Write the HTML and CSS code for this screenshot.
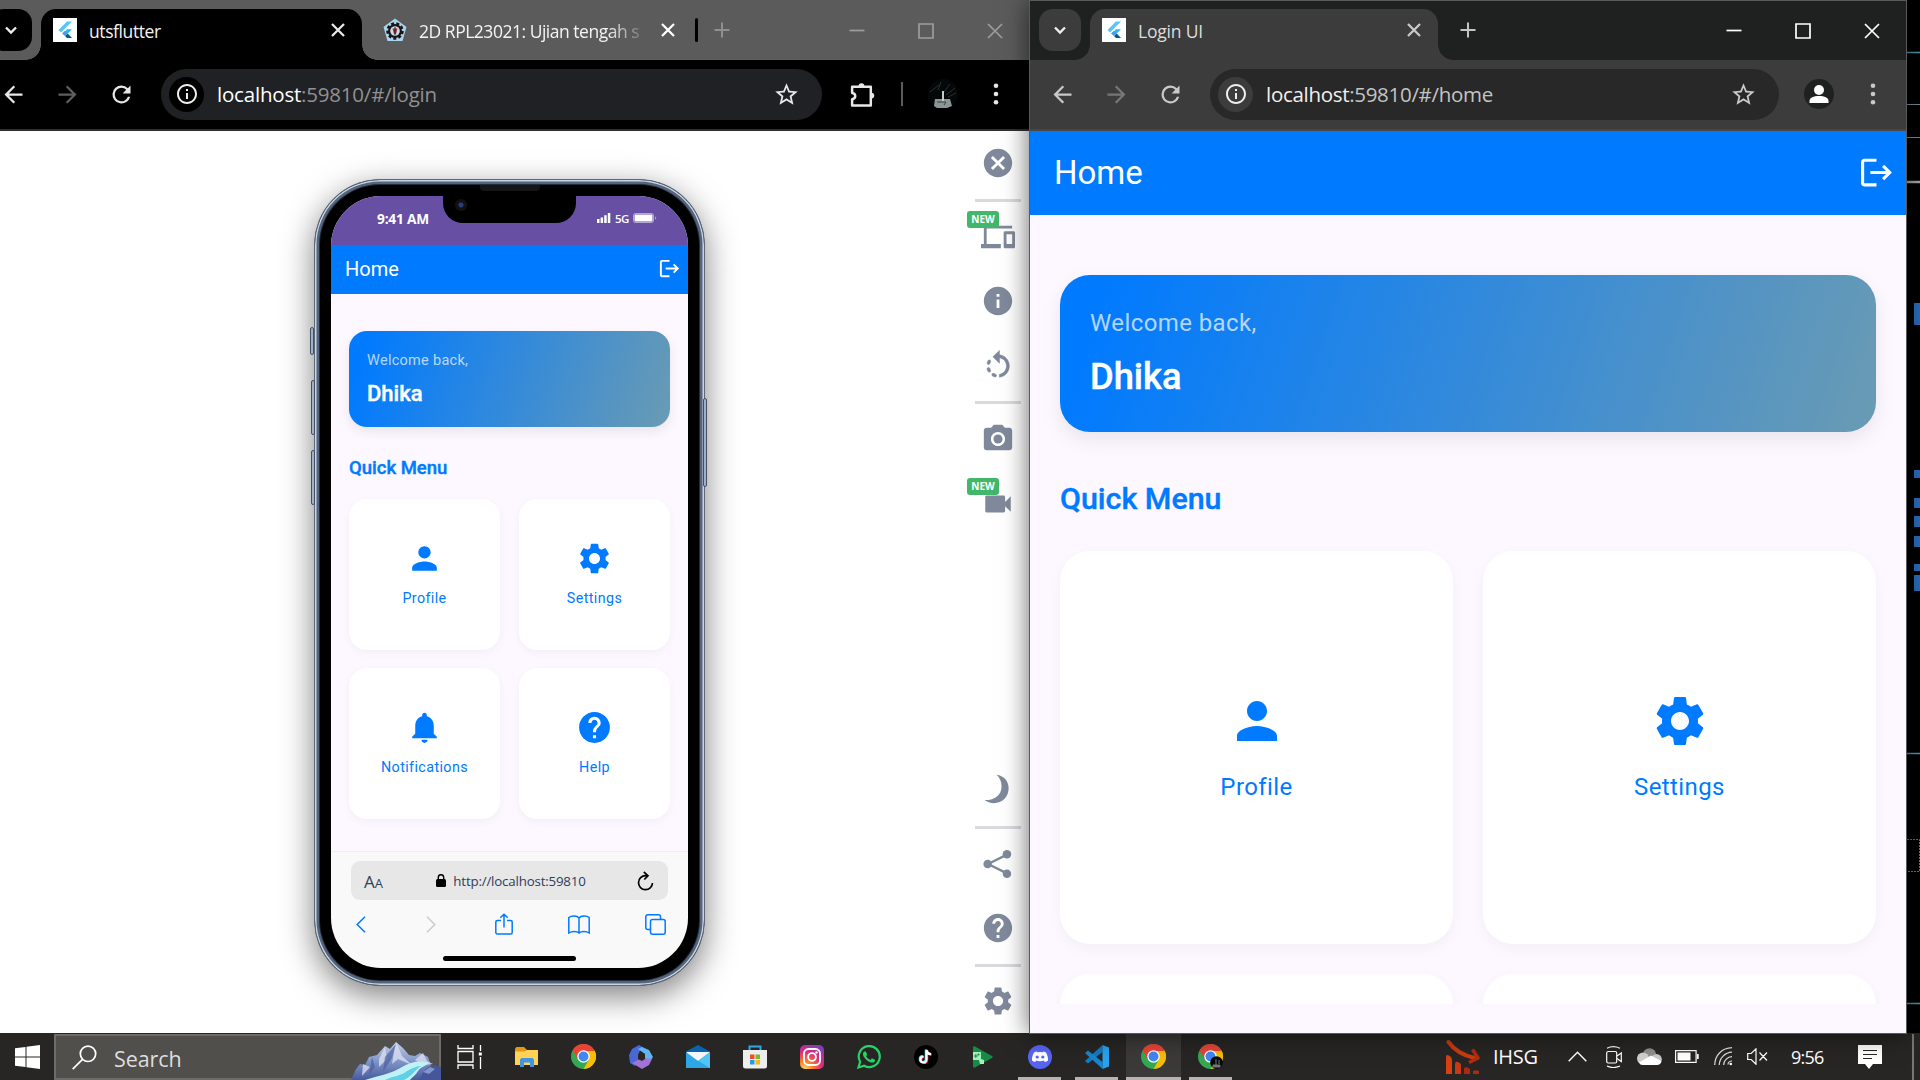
FILE: index.html
```html
<!DOCTYPE html>
<html lang="en">
<head>
<meta charset="utf-8">
<title>Desktop</title>
<link rel="stylesheet" href="styles.css">
</head>
<body>
<svg class="defs" aria-hidden="true">
  <symbol id="gear" viewBox="0 0 24 24"><path d="M19.14 12.94c.04-.3.06-.61.06-.94 0-.32-.02-.64-.07-.94l2.03-1.58c.18-.14.23-.41.12-.61l-1.92-3.32c-.12-.22-.37-.29-.59-.22l-2.39.96c-.5-.38-1.03-.7-1.62-.94l-.36-2.54c-.04-.24-.24-.41-.48-.41h-3.84c-.24 0-.43.17-.47.41l-.36 2.54c-.59.24-1.13.57-1.62.94l-2.39-.96c-.22-.08-.47 0-.59.22L2.74 8.87c-.12.21-.08.47.12.61l2.03 1.58c-.05.3-.09.63-.09.94s.02.64.07.94l-2.03 1.58c-.18.14-.23.41-.12.61l1.92 3.32c.12.22.37.29.59.22l2.39-.96c.5.38 1.03.7 1.62.94l.36 2.54c.05.24.24.41.48.41h3.84c.24 0 .44-.17.47-.41l.36-2.54c.59-.24 1.13-.56 1.62-.94l2.39.96c.22.08.47 0 .59-.22l1.92-3.32c.12-.22.07-.47-.12-.61l-2.01-1.58zM12 15.6c-1.98 0-3.6-1.62-3.6-3.6s1.62-3.6 3.6-3.6 3.6 1.62 3.6 3.6-1.62 3.6-3.6 3.6z"/></symbol>
  <symbol id="person" viewBox="0 0 24 24"><path d="M12 12c2.21 0 4-1.79 4-4s-1.79-4-4-4-4 1.79-4 4 1.79 4 4 4zm0 2c-2.67 0-8 1.34-8 4v2h16v-2c0-2.66-5.33-4-8-4z"/></symbol>
  <symbol id="bell" viewBox="0 0 24 24"><path d="M12 22c1.1 0 2-.9 2-2h-4c0 1.1.89 2 2 2zm6-6v-5c0-3.07-1.64-5.64-4.5-6.32V4c0-.83-.67-1.5-1.5-1.5s-1.5.67-1.5 1.5v.68C7.63 5.36 6 7.92 6 11v5l-2 2v1h16v-1l-2-2z"/></symbol>
  <symbol id="help" viewBox="0 0 24 24"><path d="M12 2C6.48 2 2 6.48 2 12s4.480 10 10 10 10-4.480 10-10S17.520 2 12 2zm1 17h-2v-2h2v2zm2.070-7.750l-.9.920C13.450 12.900 13 13.500 13 15h-2v-.5c0-1.100.450-2.100 1.170-2.830l1.240-1.260c.370-.360.590-.860.590-1.410 0-1.100-.9-2-2-2s-2 .9-2 2H8c0-2.210 1.790-4 4-4s4 1.790 4 4c0 .880-.360 1.680-.930 2.250z"/></symbol>
  <symbol id="info" viewBox="0 0 24 24"><path d="M12 2C6.480 2 2 6.480 2 12s4.480 10 10 10 10-4.480 10-10S17.520 2 12 2zm1 15h-2v-6h2v6zm0-8h-2V7h2v2z"/></symbol>
  <symbol id="info-o" viewBox="0 0 24 24"><path d="M11 7h2v2h-2zm0 4h2v6h-2zm1-9C6.480 2 2 6.480 2 12s4.480 10 10 10 10-4.480 10-10S17.520 2 12 2zm0 18c-4.410 0-8-3.590-8-8s3.590-8 8-8 8 3.590 8 8-3.590 8-8 8z"/></symbol>
  <symbol id="cancel" viewBox="0 0 24 24"><path d="M12 2C6.470 2 2 6.470 2 12s4.470 10 10 10 10-4.470 10-10S17.530 2 12 2zm5 13.590L15.590 17 12 13.410 8.410 17 7 15.590 10.590 12 7 8.410 8.410 7 12 10.590 15.590 7 17 8.410 13.410 12 17 15.590z"/></symbol>
  <symbol id="devices" viewBox="0 0 24 24"><path d="M4 6h18V4H4c-1.100 0-2 .9-2 2v11H0v3h14v-3H4V6zm19 2h-6c-.55 0-1 .45-1 1v10c0 .55.45 1 1 1h6c.55 0 1-.45 1-1V9c0-.55-.45-1-1-1zm-1 9h-4v-7h4v7z"/></symbol>
  <symbol id="rotate" viewBox="0 0 24 24"><path d="M6.560 7.980C6.100 7.520 5.310 7.600 5 8.170c-.28.510-.5 1.030-.67 1.580-.19.630.31 1.250.96 1.250h.01c.43 0 .82-.28.940-.7.120-.4.280-.79.480-1.170.22-.37.150-.84-.16-1.150zM5.310 13h-.02c-.65 0-1.150.620-.96 1.250.160.540.380 1.070.66 1.580.31.570 1.110.66 1.570.2.3-.31.380-.77.170-1.150-.2-.37-.36-.76-.48-1.160-.13-.44-.520-.72-.940-.72zm2.850 6.020c.51.280 1.040.5 1.590.66.620.180 1.240-.32 1.240-.96v-.03c0-.43-.28-.82-.7-.94-.4-.12-.78-.28-1.150-.48-.38-.21-.86-.14-1.160.17l-.03.030c-.45.450-.36 1.240.21 1.550zM13 4.070V1L8.450 5.550 13 10V6.090c2.840.48 5 2.940 5 5.910s-2.160 5.430-5 5.910v2.020c3.950-.49 7-3.850 7-7.930s-3.050-7.440-7-7.930z" stroke="currentColor" stroke-width=".4"/></symbol>
  <symbol id="camera" viewBox="0 0 24 24"><circle cx="12" cy="12" r="3.200"/><path d="M9 2L7.170 4H4c-1.100 0-2 .9-2 2v12c0 1.100.9 2 2 2h16c1.100 0 2-.9 2-2V6c0-1.100-.9-2-2-2h-3.170L15 2H9zm3 15c-2.760 0-5-2.240-5-5s2.240-5 5-5 5 2.240 5 5-2.240 5-5 5z"/></symbol>
  <symbol id="video" viewBox="0 0 24 24"><path d="M17 10.500V7c0-.55-.45-1-1-1H4c-.55 0-1 .45-1 1v10c0 .55.45 1 1 1h12c.55 0 1-.45 1-1v-3.500l4 4v-11l-4 4z"/></symbol>
  <symbol id="share" viewBox="0 0 24 24"><path d="M5 12L19 5M5 12l14 7" stroke="currentColor" stroke-width="1.700"/><circle cx="4.700" cy="12" r="3"/><circle cx="18.300" cy="5.200" r="3"/><circle cx="18.300" cy="18.800" r="3"/></symbol>
  <symbol id="moon" viewBox="0 0 24 24"><path d="M11 2c5 .5 8.500 4.500 8.500 9.500 0 6-4.500 10.500-10.500 10.500-2.500 0-4.700-.8-6.500-2.200 7 .2 12-3.300 12-9.800 0-3.400-1.300-6-3.500-8z"/></symbol>
  <symbol id="logout" viewBox="0 0 24 24"><path d="M17 7l-1.410 1.410L18.170 11H8v2h10.170l-2.580 2.580L17 17l5-5zM4 5h8V3H4c-1.100 0-2 .9-2 2v14c0 1.100.9 2 2 2h8v-2H4V5z"/></symbol>
  <symbol id="back" viewBox="0 0 24 24"><path d="M20 11H7.830l5.590-5.590L12 4l-8 8 8 8 1.410-1.410L7.830 13H20v-2z"/></symbol>
  <symbol id="fwd" viewBox="0 0 24 24"><path d="M4 11h12.170l-5.590-5.590L12 4l8 8-8 8-1.410-1.410L16.170 13H4v-2z"/></symbol>
  <symbol id="reload" viewBox="0 0 24 24"><path d="M17.650 6.350A7.958 7.958 0 0 0 12 4a8 8 0 1 0 7.730 10h-2.080A6 6 0 1 1 12 6c1.660 0 3.140.69 4.220 1.780L13 11h7V4l-2.350 2.350z"/></symbol>
  <symbol id="star" viewBox="0 0 24 24"><path d="M22 9.240l-7.190-.62L12 2 9.190 8.630 2 9.240l5.460 4.730L5.820 21 12 17.270 18.180 21l-1.630-7.030L22 9.240zM12 15.400l-3.760 2.270 1-4.280-3.320-2.880 4.380-.38L12 6.100l1.710 4.040 4.380.38-3.320 2.880 1 4.280L12 15.400z"/></symbol>
  <symbol id="close" viewBox="0 0 24 24"><path d="M6 6l12 12M18 6L6 18" fill="none" stroke="currentColor" stroke-width="2.300"/></symbol>
  <symbol id="plus" viewBox="0 0 24 24"><path d="M12 4.500v15M4.500 12h15" fill="none" stroke="currentColor" stroke-width="2"/></symbol>
  <symbol id="chev" viewBox="0 0 24 24"><path d="M6 9l6 6 6-6" fill="none" stroke="currentColor" stroke-width="2.800"/></symbol>
  <symbol id="dots" viewBox="0 0 24 24"><circle cx="12" cy="3.800" r="2.300"/><circle cx="12" cy="12" r="2.300"/><circle cx="12" cy="20.200" r="2.300"/></symbol>
  <symbol id="w-min" viewBox="0 0 16 16"><path d="M.5 7.500h15" stroke="currentColor" stroke-width="1.700"/></symbol>
  <symbol id="w-max" viewBox="0 0 16 16"><path d="M1 1h14v14h-14z" fill="none" stroke="currentColor" stroke-width="1.700"/></symbol>
  <symbol id="w-close" viewBox="0 0 16 16"><path d="M1 1l14 14M15 1L1 15" stroke="currentColor" stroke-width="1.700"/></symbol>
  <symbol id="flutter" viewBox="0 0 24 24"><path fill="#fff" d="M0 0h24v24H0z"/><path fill="#54c5f8" d="M5.500 12L14 3.500h5L8 14.500z"/><path fill="#29b6f6" d="M10 15.500l4-4.200h5l-4.300 4.200z"/><path fill="#01579b" d="M12 18l2.700-2.500 4.300 4.500h-5z"/><path fill="#4b9be6" d="M9 15.400l2.600-2.500 3 2.700-2.600 2.500z"/></symbol>
  <symbol id="chrome" viewBox="0 0 48 48"><circle cx="24" cy="24" r="24" fill="#34a853"/><path fill="#fbbc05" d="M34.400 30L24 48a24 24 0 0 0 20.800-36H24z"/><path fill="#ea4335" d="M3.200 12l10.400 18L24 13.500h20.800V12a24 24 0 0 0-41.600 0z"/><circle cx="24" cy="24" r="12" fill="#fff"/><circle cx="24" cy="24" r="9.500" fill="#4285f4"/></symbol>
</svg>

<main class="desktop">
  <svg class="wall" viewBox="0 0 13 1034" width="13" height="1034">
    <path d="M0 52.500h13M0 753.500h13M0 1003.500h13" stroke="#4f9db5" stroke-width="1.300"/>
    <path d="M0 104.500h13M0 137.500h13" stroke="#77939c"/>
    <path d="M0 182h13" stroke="#aaa" stroke-width="2.500"/>
    <path d="M7 303h6v22H7zM7 470h6v8H7zM7 498h6v10H7zM7 516h6v11H7zM7 536h6v11H7zM7 564h6v7H7zM7 575h6v16H7z" fill="#2a6fc4"/>
    <path d="M0 839.500h12.500v32H0" fill="none" stroke="#a26a35" stroke-dasharray="2 1"/>
  </svg>

  <section class="window window-left">
    <header class="tabstrip">
      <span class="tabsearch"><svg class="i18"><use href="#chev"/></svg></span>
      <div class="tab active">
        <svg class="i24"><use href="#flutter"/></svg>
        <span class="tab-title t-uts">utsflutter</span>
        <svg class="i24"><use href="#close"/></svg>
      </div>
      <div class="tab second">
        <svg class="i24" viewBox="0 0 24 24"><path fill="#a9d3ee" d="M12 .5L23.500 9l-4 14h-15l-4-14z"/><circle cx="12" cy="13" r="7" fill="#191414"/><circle cx="12" cy="13" r="7.500" fill="none" stroke="#191414" stroke-width="2.500" stroke-dasharray="3 2.200"/><circle cx="12" cy="13" r="4.800" fill="#c9dce6"/><path d="M9.500 10.500h5L13 16h-2z" fill="#a32b30"/><path d="M12 9v8" stroke="#222"/></svg>
        <span class="tab-title t-rpl">2D RPL23021: Ujian tengah s</span>
        <svg class="i24"><use href="#close"/></svg>
      </div>
      <span class="tabline"></span>
      <svg class="i24 newtab"><use href="#plus"/></svg>
      <div class="winbtns"><svg><use href="#w-min"/></svg><svg><use href="#w-max"/></svg><svg><use href="#w-close"/></svg></div>
    </header>
    <nav class="toolbar">
      <svg class="i26"><use href="#back"/></svg>
      <svg class="i26 dim"><use href="#fwd"/></svg>
      <svg class="i26"><use href="#reload"/></svg>
      <div class="omnibox">
        <span class="site"><svg class="i24"><use href="#info-o"/></svg></span>
        <span class="url u-login"><b>localhost</b>:59810/#/login</span>
        <svg class="i26"><use href="#star"/></svg>
      </div>
      <svg class="i26 puzzle" viewBox="0 0 26 26"><path d="M3 5.500h18v18H3v-6c4-.5 4-5.500 0-6z" fill="none" stroke="currentColor" stroke-width="2.400" stroke-linejoin="round"/><path d="M9.200 5a2.800 2.800 0 0 1 5.600 0zM21.500 11.200a2.800 2.800 0 0 1 0 5.600z"/></svg>
      <span class="tooldiv"></span>
      <svg class="avatar" viewBox="0 0 30 30"><circle cx="15" cy="15" r="15" fill="#050808"/><path d="M2 13l9-7M13 3l-3 8M22 5l-6 8M27 9l-9 7M28 14l-8 4" stroke="#263234"/><path d="M7 20h15l2 7-5 2H9l-3-2z" fill="#8d9694"/><path d="M15 12v10" stroke="#c4cccc" stroke-width="2"/><path d="M9 23h9l-2 3" stroke="#3a4242" fill="none"/></svg>
      <svg class="i24 menu"><use href="#dots"/></svg>
    </nav>

    <div class="page">
      <div class="stage">
        <div class="phone">
          <i class="key k1"></i><i class="key k2"></i><i class="key k3"></i><i class="key k4"></i>
          <i class="speaker"></i>
          <div class="screen">
            <div class="status">
              <b>9:41 AM</b>
              <div class="notch"><i></i></div>
              <span class="signal">
                <svg width="14" height="10" viewBox="0 0 14 10"><path d="M0 6h2.500v4H0zM3.600 4.500h2.500V10H3.600zM7.200 2.300h2.500V10H7.200zM10.800 0h2.500v10h-2.500z"/></svg>
                <em>5G</em>
                <svg width="24" height="10" viewBox="0 0 24 10"><rect x=".5" y=".5" width="20" height="9" rx="2" fill="none" stroke="#fff" stroke-opacity=".5"/><rect x="1.500" y="1.500" width="18" height="7" rx="1"/><path d="M22 3v4l1.300-2z" opacity=".5"/></svg>
              </span>
            </div>
            <div class="app small">
              <header class="appbar"><span>Home</span><svg><use href="#logout"/></svg></header>
              <div class="appbody">
                <div class="welcome"><p>Welcome back,</p><h2>Dhika</h2></div>
                <h3>Quick Menu</h3>
                <div class="grid">
                  <div class="card"><svg><use href="#person"/></svg><span>Profile</span></div>
                  <div class="card"><svg><use href="#gear"/></svg><span>Settings</span></div>
                  <div class="card"><svg><use href="#bell"/></svg><span>Notifications</span></div>
                  <div class="card"><svg><use href="#help"/></svg><span>Help</span></div>
                </div>
              </div>
            </div>
            <div class="safari">
              <div class="address">
                <span class="aa">A<small>A</small></span>
                <span class="host"><svg width="10" height="13" viewBox="0 0 10 13"><rect y="5" width="10" height="8" rx="1.500"/><path d="M2.300 6V3.500a2.700 2.700 0 0 1 5.400 0V6" fill="none" stroke="#000" stroke-width="1.400"/></svg>http://localhost:59810</span>
                <svg width="17" height="20" viewBox="0 0 17 20" fill="none" stroke="#000" stroke-width="1.700"><path d="M11 4.700H8.500a7 7 0 1 0 7 7.300M6.800 1l4.200 3.700L7.300 8.500"/></svg>
              </div>
              <div class="tools">
                <svg width="10" height="17" viewBox="0 0 10 17"><path d="M9 .8L1.200 8.500 9 16.200"/></svg>
                <svg width="10" height="17" viewBox="0 0 10 17" class="off"><path d="M1 .8l7.800 7.700L1 16.200"/></svg>
                <svg width="18" height="22" viewBox="0 0 18 22"><path d="M6 7.500H2.300A1.500 1.500 0 0 0 .8 9v10.500A1.500 1.500 0 0 0 2.300 21h13.400a1.500 1.500 0 0 0 1.500-1.500V9a1.500 1.500 0 0 0-1.500-1.500H12M9 14.500V1.200M5.300 4.800L9 1.200l3.700 3.600"/></svg>
                <svg width="22" height="19" viewBox="0 0 22 19"><path d="M11 3v14.500M11 3C9 .5 3.500.5.800 2.500v15.500c2.700-2 8.200-2 10.200 0 2-2 7.500-2 10.200 0V2.500C18.500.5 13 .5 11 3z"/></svg>
                <svg width="21" height="21" viewBox="0 0 21 21"><rect x="5.500" y="5.500" width="14.700" height="14.700" rx="2"/><path d="M5.500 15.500H2.800a2 2 0 0 1-2-2V2.800a2 2 0 0 1 2-2h10.700a2 2 0 0 1 2 2v2.700"/></svg>
              </div>
              <i class="homebar"></i>
            </div>
          </div>
        </div>
      </div>
      <aside class="rail">
        <span><svg><use href="#cancel"/></svg></span>
        <hr>
        <span class="new"><svg><use href="#devices"/></svg><em>NEW</em></span>
        <span><svg><use href="#info"/></svg></span>
        <span><svg><use href="#rotate"/></svg></span>
        <hr>
        <span><svg><use href="#camera"/></svg></span>
        <span class="new low"><svg><use href="#video"/></svg><em>NEW</em></span>
        <span></span>
        <span><svg><use href="#moon"/></svg></span>
        <hr>
        <span><svg><use href="#share"/></svg></span>
        <span><svg><use href="#help"/></svg></span>
        <hr>
        <span><svg><use href="#gear"/></svg></span>
      </aside>
    </div>
  </section>

  <section class="window window-right">
    <header class="tabstrip">
      <span class="tabsearch"><svg class="i18"><use href="#chev"/></svg></span>
      <div class="tab active">
        <svg class="i24"><use href="#flutter"/></svg>
        <span class="tab-title t-login">Login UI</span>
        <svg class="i24"><use href="#close"/></svg>
      </div>
      <svg class="i24 newtab"><use href="#plus"/></svg>
      <div class="winbtns"><svg><use href="#w-min"/></svg><svg><use href="#w-max"/></svg><svg><use href="#w-close"/></svg></div>
    </header>
    <nav class="toolbar">
      <svg class="i26"><use href="#back"/></svg>
      <svg class="i26 dim"><use href="#fwd"/></svg>
      <svg class="i26"><use href="#reload"/></svg>
      <div class="omnibox">
        <span class="site"><svg class="i24"><use href="#info-o"/></svg></span>
        <span class="url"><b>localhost</b>:59810/#/home</span>
        <svg class="i26"><use href="#star"/></svg>
      </div>
      <svg class="avatar" viewBox="0 0 30 30"><circle cx="15" cy="15" r="15" fill="#1f2120"/><circle cx="15" cy="11" r="5" fill="#fff"/><path d="M5.500 24v-2c0-3.500 4-5 9.500-5s9.500 1.500 9.500 5v2z" fill="#fff"/></svg>
      <svg class="i24 menu"><use href="#dots"/></svg>
    </nav>
    <div class="app big">
      <header class="appbar"><span>Home</span><svg><use href="#logout"/></svg></header>
      <div class="appbody">
        <div class="welcome"><p>Welcome back,</p><h2>Dhika</h2></div>
        <h3>Quick Menu</h3>
        <div class="grid">
          <div class="card"><svg><use href="#person"/></svg><span>Profile</span></div>
          <div class="card"><svg><use href="#gear"/></svg><span>Settings</span></div>
          <div class="card"></div>
          <div class="card"></div>
        </div>
      </div>
    </div>
  </section>

  <footer class="taskbar">
    <span class="start"><svg width="25" height="24" viewBox="0 0 25 24"><path fill="#fff" d="M0 3.300l10.500-1.400v9.600H0zM11.500 1.700L25 0v11.500H11.500zM0 12.500h10.500v9.600L0 20.700zM11.500 12.500H25V24l-13.500-1.700z"/></svg></span>
    <div class="search">
      <svg width="25" height="25" viewBox="0 0 25 25"><circle cx="16" cy="8.800" r="7.700" fill="none" stroke="#fff" stroke-width="1.700"/><path d="M10.500 14.300L.7 24.200" stroke="#fff" stroke-width="1.700"/></svg>
      <span>Search</span>
      <svg class="peak" width="90" height="38" viewBox="0 0 90 38"><defs><linearGradient id="rk" x1="0" y1="0" x2="0" y2="1"><stop offset="0" stop-color="#c3cfe8"/><stop offset=".5" stop-color="#7f95c8"/><stop offset="1" stop-color="#44579a"/></linearGradient></defs><path d="M0 38l5-11 4-5 5 1 4-8 8-2 8-9 5 3 6-7 7 6 6 7 6 1 5-3 8 4 3 9 8 1 2 14z" fill="url(#rk)"/><path d="M45 0l6 14 10 9-14-6-6 5zM34 5l2 12-8 8 0-8zM12 22l7 3-8 9zM72 11l4 8 6 3-10 1-8-5z" fill="#dadcee" opacity=".8"/><path d="M45 2l-4 14-9 14 2-15zM21 15l3 10-6 8z" fill="#4c619f" opacity=".7"/><path d="M14 38c16-5 26-6 37-13 8-5 19-7 27-4-3 3-9 4-11 8s-6 6-8 9z" fill="#bff1f7"/><path d="M34 38c8-4 16-4 22-9 5-3 10-5 14-5-7 5-9 10-17 14z" fill="#5fd0e6"/><path d="M68 38c3-7 6-12 13-15l9 2v13z" fill="#46569a"/><path d="M72 30l7-5 5 2-6 5z" fill="#8396c8"/></svg>
    </div>
    <div class="apps">
      <span><svg width="26" height="24" viewBox="0 0 26 24" fill="none" stroke="#fff" stroke-width="1.300"><path d="M1 0v3.500h15V0M1 24v-4h15v4M1 6.500h15v10.500H1zM23.500 0v6M23.500 12v12"/><path d="M21.800 7.500h3v3h-3z" fill="#fff" stroke="none"/></svg></span>
      <span><svg width="23" height="20" viewBox="0 0 23 20"><path fill="#e09a16" d="M0 1.500L1.500 0H9l3 3v3H0z"/><path fill="#ffd257" d="M0 4.500h10L12 3h11v15H0z"/><path fill="#3f95e2" d="M5 20v-7.500L6.500 11h11l1.500 1.500V20h-4v-4.500H9V20z"/></svg></span>
      <span><svg width="25" height="25"><use href="#chrome"/></svg></span>
      <span><svg width="24" height="24" viewBox="0 0 24 24"><path fill="#4a67d6" d="M10 0l5 3-5 4v9l-4 5-5-3-1-8 3-6z"/><path fill="#5fb4f2" d="M13 2l7 3 4 7-3 4-5-1V9L9 4z"/><path fill="#a173d8" d="M3 18l6-3 7-2 7 1-3 6-7 4z"/><path fill="#272625" d="M9 9l3-2 4 2v5l-3 2-4-2z"/></svg></span>
      <span><svg width="24" height="23" viewBox="0 0 24 23"><path fill="#0a64ad" d="M0 6.500L12 0l12 6.500V14H0z"/><path fill="#f4f6f8" d="M1 7h22v8l-11 4L1 15z"/><path fill="#2da6e8" d="M0 7l12 9L24 7v16H0z"/><path fill="#51c4f4" d="M24 7v16L10 14.500l2 1.500z"/></svg></span>
      <span><svg width="24" height="24" viewBox="0 0 24 24"><path d="M6.500 7V1.500h11V7" fill="none" stroke="#29a8ea" stroke-width="2"/><path d="M0 5h24v16a2.500 2.500 0 0 1-2.500 2.500h-19A2.500 2.500 0 0 1 0 21z" fill="#eeeeed"/><path fill="#f04e27" d="M7 9.500h4.500V14H7z"/><path fill="#7db82b" d="M12.500 9.500H17V14h-4.500z"/><path fill="#209fe4" d="M7 15h4.500v4.500H7z"/><path fill="#fbb514" d="M12.500 15H17v4.500h-4.500z"/></svg></span>
      <span><svg width="24" height="24" viewBox="0 0 24 24"><defs><radialGradient id="ig" cx=".2" cy="1" r="1.200"><stop offset="0" stop-color="#fed65c"/><stop offset=".3" stop-color="#f9772f"/><stop offset=".6" stop-color="#dc2b7c"/><stop offset="1" stop-color="#7040c8"/></radialGradient></defs><rect width="24" height="24" rx="5" fill="url(#ig)"/><g fill="none" stroke="#fff" stroke-width="1.900"><rect x="4" y="4" width="16" height="16" rx="4.500"/><circle cx="12" cy="12" r="3.900"/></g><circle cx="16.500" cy="7.500" r="1.200" fill="#fff"/></svg></span>
      <span><svg width="24" height="24" viewBox="0 0 24 24"><path fill="#25d366" d="M17.472 14.382c-.297-.149-1.758-.867-2.030-.967-.273-.099-.471-.148-.67.150-.197.297-.767.966-.94 1.164-.173.199-.347.223-.644.075-.297-.150-1.255-.463-2.390-1.475-.883-.788-1.480-1.761-1.653-2.059-.173-.297-.018-.458.130-.606.134-.133.298-.347.446-.52.149-.174.198-.298.298-.497.099-.198.050-.371-.025-.52-.075-.149-.669-1.612-.916-2.207-.242-.579-.487-.5-.669-.51-.173-.008-.371-.010-.57-.010-.198 0-.52.074-.792.372-.272.297-1.040 1.016-1.040 2.479 0 1.462 1.065 2.875 1.213 3.074.149.198 2.096 3.200 5.077 4.487.709.306 1.262.489 1.694.625.712.227 1.360.195 1.871.118.571-.085 1.758-.719 2.006-1.413.248-.694.248-1.289.173-1.413-.074-.124-.272-.198-.57-.347z"/><path d="M1.500 22.500l1.600-5.800a10.500 10.500 0 1 1 4 4z" fill="none" stroke="#25d366" stroke-width="2.200"/></svg></span>
      <span><svg width="24" height="24" viewBox="0 0 24 24"><circle cx="12" cy="12" r="12" fill="#000"/><g fill="none" stroke-width="2.200"><path d="M12.500 5v9.500a3 3 0 1 1-3-3M12.500 5c.3 2.500 2 4 4.500 4.200" stroke="#25f4ee" transform="translate(-.7 -.5)"/><path d="M12.500 5v9.500a3 3 0 1 1-3-3M12.500 5c.3 2.500 2 4 4.500 4.200" stroke="#fe2c55" transform="translate(.7 .5)"/><path d="M12.500 5v9.500a3 3 0 1 1-3-3M12.500 5c.3 2.500 2 4 4.500 4.200" stroke="#fff"/></g></svg></span>
      <span><svg width="20" height="22" viewBox="0 0 20 22"><path fill="#178a46" d="M0 1.500C0 .3 1 0 2 .5L19 10c1 .5 1 1.500 0 2L2 21.500c-1 .5-2 0-2-1z"/><path fill="#a7edbd" d="M0 6h8v7l3 1v4l-4 0-1-4H0z"/><circle cx="5.500" cy="8.500" r="1.100" fill="#178a46"/><path d="M.8 10h4M2.800 8v4" stroke="#178a46"/></svg></span>
      <span class="open"><svg width="24" height="24" viewBox="0 0 24 24"><circle cx="12" cy="12" r="12" fill="#5865f2"/><path fill="#fff" d="M8.500 6.500l1 .8a12 12 0 0 1 5 0l1-.8c1 .2 2 .6 2.500 1 1.500 2.500 2.200 5.500 2 8-1 .9-2.300 1.400-3.200 1.500l-.9-1.500a12 12 0 0 1-7.800 0L7.200 17c-1-.1-2.300-.6-3.200-1.500-.2-2.500.5-5.500 2-8 .5-.4 1.500-.8 2.500-1z"/><circle cx="9.200" cy="12" r="1.600" fill="#5865f2"/><circle cx="14.800" cy="12" r="1.600" fill="#5865f2"/></svg></span>
      <span class="open"><svg width="24" height="24" viewBox="0 0 24 24"><path fill="#0f7cc4" d="M17.500 0v7L3 18.500 0 16z"/><path fill="#1486d0" d="M0 8l3-2.500L17.500 17v7z"/><path fill="#2aa3ee" d="M17.500 0L24 2.500v19L17.500 24z"/></svg></span>
      <span class="open current"><svg width="25" height="25"><use href="#chrome"/></svg></span>
      <span class="open"><svg width="25" height="25" viewBox="0 0 25 25"><use href="#chrome" width="25" height="25"/><circle cx="18.500" cy="18.500" r="6.300" fill="#070909"/><path d="M15 21h7v2h-7zM18 15v6M21 16v4" stroke="#777" fill="#777"/></svg></span>
    </div>
    <div class="tray">
      <svg class="stock" width="34" height="34" viewBox="0 0 34 34"><path d="M2.500 2c5 7 13 13 26 16" fill="none" stroke="#c93c12" stroke-width="4" stroke-linecap="round"/><path d="M26.500 9.500l5.500 8.500-9 4.500" fill="none" stroke="#b22d10" stroke-width="3.500" stroke-linejoin="round"/><path d="M0 17q0-3 3-1.500t3 4V34H0z" fill="#d9400f"/><path d="M9 24q0-3 3-2t3 3v9H9z" fill="#c93a14"/><path d="M18 28q3-2 6 1v5h-6zM27 31q3-1.500 6 0v3h-6z" fill="#a92c12"/></svg>
      <span class="ihsg">IHSG</span>
      <svg class="caret" width="19" height="11" viewBox="0 0 19 11"><path d="M.7 10.200l8.800-9 8.800 9" fill="none" stroke="#fff" stroke-width="1.400"/></svg>
      <svg class="meet" width="16" height="22" viewBox="0 0 16 22" fill="none" stroke="#fff" stroke-width="1.200"><rect x=".7" y="5.500" width="10" height="11.500" rx="1.500"/><path d="M11 10l4.300-3v8.500L11 12.500M1 2.200q6-3 13 0M1 20q6 3 13 0"/></svg>
      <svg class="cloud" width="25" height="17" viewBox="0 0 25 17"><circle cx="12.500" cy="7" r="6.800" fill="#8f8f8f"/><circle cx="6" cy="10.500" r="6" fill="#d0d0d0"/><circle cx="19.500" cy="11.200" r="5.300" fill="#c8c8c8"/><path d="M2 14.500L14 7.500l10.500 5.500q-.5 4-5 4h-14Q3 17 2 14.500z" fill="#fff"/></svg>
      <svg class="batt" width="24" height="13" viewBox="0 0 24 13"><path d="M.6.600h20.500v11.800H.6z" fill="none" stroke="#fff" stroke-width="1.200"/><path d="M2.500 2.500h13v8h-13zM22 4h1.700v5H22z" fill="#fff"/></svg>
      <svg class="wifi" width="19" height="19" viewBox="0 0 19 19" fill="none" stroke="#ddd" stroke-width="1.200"><path d="M.7 18C1 8 8 1 18 .7M5.200 18C5.500 11 11 5.500 18 5.200M9.700 18c0-4.500 4-8.300 8.300-8.300"/><path d="M14 17.500c0-2 2-3.500 4-3.500"/><circle cx="16.800" cy="17" r="1.300" fill="#fff" stroke="none"/></svg>
      <svg class="vol" width="21" height="17" viewBox="0 0 21 17" fill="none" stroke="#fff" stroke-width="1.200"><path d="M.7 5.500h3.500L9 .8v15.400l-4.800-4.700H.7zM12.500 4.500l7.500 8M20 4.500l-7.500 8"/></svg>
      <span class="clock">9:56</span>
      <svg class="notif" width="24" height="24" viewBox="0 0 24 24"><path d="M0 0h24v19H15l-4 5-4-5H0z" fill="#fff"/><path d="M5 5.500h14M5 9.500h14M5 13.500h9" stroke="#272625" stroke-width="1.100"/></svg>
      <i class="peekline"></i>
    </div>
  </footer>
</main>
</body>
</html>
```
FILE: styles.css
```css
* { box-sizing: border-box; }
body { margin: 0; background: #000; }
h2, h3, p { margin: 0; }
em { font-style: normal; }
svg { display: block; flex: none; }
svg:not([fill]) { fill: currentColor; }
.defs { position: absolute; width: 0; height: 0; }
.desktop { position: relative; width: 1920px; height: 1080px; overflow: hidden; background: #000; font-family: "Open Sans", "Noto Sans", sans-serif; }
.wall { position: absolute; left: 1907px; top: 0; }
.i18 { width: 20px; height: 20px; }
.i24 { width: 24px; height: 24px; }
.i26 { width: 27px; height: 27px; }

/* browser windows */
.window { position: absolute; top: 0; height: 1034px; display: flex; flex-direction: column; }
.window-left { left: -20px; width: 1049px; color: #e8e8e8; --strip: #5b5b5b; --bar: #000; --field: #202124; --dim: #5f5f5f; --host: #fff; --path: #919191; }
.window-right { left: 1029px; width: 878px; z-index: 1; color: #c9c9c9; --strip: #1f2120; --bar: #3c3c3c; --field: #282828; --dim: #777; --host: #f0f0f0; --path: #c4c4c4; box-shadow: 0 0 24px rgba(0,0,0,.6); }
.window-right::after { content: ""; position: absolute; inset: 0; border: 1px solid #5a5a5a; pointer-events: none; }
.tabstrip { height: 60px; background: var(--strip); display: flex; align-items: center; position: relative; padding-left: 10px; flex: none; }
.tabsearch { width: 42px; height: 42px; border-radius: 14px; background: var(--bar); display: grid; place-items: center; margin-right: 9px; color: #eee; }
.tab { display: flex; align-items: center; height: 51px; align-self: flex-end; padding: 0 12px 9px; }
.tab.active { position: relative; background: var(--bar); border-radius: 15px 15px 0 0; }
.tab.active::before, .tab.active::after { content: ""; position: absolute; bottom: 0; width: 15px; height: 15px; }
.tab.active::before { left: -15px; background: radial-gradient(circle at 0 0, transparent 14.5px, var(--bar) 15px); }
.tab.active::after { right: -15px; background: radial-gradient(circle at 100% 0, transparent 14.5px, var(--bar) 15px); }
.window-left .tab.active { width: 321px; }
.window-right .tab.active { width: 348px; }
.tab-title { flex: 1; font-size: 17.500px; line-height: 24px; padding: 2px 0 0 12px; white-space: nowrap; color: #f4f4f4; }
.t-uts { letter-spacing: -.4px; }
.t-login { letter-spacing: -.2px; color: #dcdcdc; }
.tab.second { width: 329px; padding-left: 21px; padding-right: 11px; color: #fff; }
.t-rpl { letter-spacing: -.48px; -webkit-mask-image: linear-gradient(90deg, #000 200px, transparent 242px); mask-image: linear-gradient(90deg, #000 200px, transparent 242px); }
.tabline { width: 3px; height: 24px; background: #000; border-radius: 2px; margin-left: 4px; }
.newtab { color: #8f8f8f; margin-left: 12px; }
.window-right .newtab { color: #c4c4c4; margin-left: 18px; }
.winbtns { display: flex; margin-left: auto; color: #9d9d9d; padding-top: 2px; }
.winbtns svg { width: 16px; height: 16px; margin: 0 26.500px; }
.window-right .winbtns { color: #fff; margin-right: 1px; }
.toolbar { height: 71px; flex: none; background: var(--bar); display: flex; align-items: center; padding: 0 20px 1px 20px; border-bottom: 2px solid #303030; position: relative; }
.window-right .toolbar { border-bottom-color: #474747; }
.toolbar > svg:nth-child(-n+3) { margin-right: 27px; }
.toolbar > svg:nth-child(3) { margin-right: 26px; }
.toolbar .dim { color: var(--dim); }
.omnibox { height: 51px; flex: 1; border-radius: 26px; background: var(--field); display: flex; align-items: center; padding: 0 22px 0 8px; }
.site { width: 35px; height: 35px; border-radius: 50%; background: var(--bar); display: grid; place-items: center; color: #eee; }
.url { flex: 1; padding-left: 13px; font-size: 20.500px; line-height: 30px; color: var(--path); letter-spacing: -.3px; white-space: nowrap; }
.u-login { letter-spacing: -.2px; }
.url b { font-weight: 400; color: var(--host); }
.puzzle { margin-left: 27px; }
.tooldiv { width: 2px; height: 24px; background: #5c5c5c; margin: 0 25px; }
.avatar { width: 30px; height: 30px; }
.window-right .avatar { margin-left: 25px; }
.menu { margin: 0 1px 0 26px; }
.window-right .menu { margin: 0 2px 0 27px; }

.page { flex: 1; background: #fff; display: flex; padding-left: 20px; }
.stage { flex: 1; padding: 48px 0 0 314px; }

/* phone */
.phone { position: relative; width: 391px; height: 807px; border-radius: 66px; padding: 16px; background: #000; border: 1px solid #5d6878; box-shadow: inset 0 0 0 1.500px #c8d4e4, inset 0 0 0 4px #53647c, inset 0 0 0 5px #222b38, 0 10px 32px rgba(0,0,0,.5); }
.screen { height: 772px; width: 357px; border-radius: 50px; overflow: hidden; display: flex; flex-direction: column; background: #f9f9f9; }
.key { position: absolute; width: 4px; background: #9fb0c8; border: 1px solid #445062; border-radius: 2px; }
.k1 { left: -5px; top: 147px; height: 28px; }
.k2 { left: -4px; top: 200px; height: 55px; }
.k3 { left: -4px; top: 270px; height: 55px; }
.k4 { right: -3px; top: 218px; height: 89px; }
.speaker { position: absolute; left: 165px; top: 5px; width: 60px; height: 6px; border-radius: 0 0 4px 4px; background: #161616; }
.status { height: 49px; background: #6750a4; color: #fff; display: flex; position: relative; justify-content: space-between; padding: 0 31px 0 46px; flex: none; }
.status b { font-size: 13.700px; line-height: 20px; margin-top: 13px; letter-spacing: -.2px; }
.notch { position: absolute; left: 112px; top: 0; width: 133px; height: 27px; background: #000; border-radius: 0 0 20px 20px; }
.notch i { position: absolute; left: 12px; top: 3px; width: 12px; height: 12px; border-radius: 50%; background: radial-gradient(circle, #2c3c80 0 2px, #111 3px); }
.signal { display: flex; align-items: center; height: 20px; margin-top: 12px; gap: 4px; }
.signal em { font-size: 11.500px; font-weight: 600; letter-spacing: -.4px; }

/* phone and desktop sizes of the same app */
.app { font-family: Roboto, sans-serif; background: #fdf7ff; display: flex; flex-direction: column; overflow: hidden; }
.small { height: 606px; flex: none; }
.big { flex: 1; }
.appbar { background: #007aff; color: #fff; display: flex; align-items: center; justify-content: space-between; flex: none; }
.small .appbar { height: 49px; padding: 0 7px 2px 14px; font-size: 20px; }
.small .appbar svg { width: 23px; height: 23px; }
.big .appbar { height: 84px; padding: 0 12px 2px 25px; font-size: 33px; }
.big .appbar svg { width: 37px; height: 37px; }
.welcome { color: #fff; background: linear-gradient(108deg, #007aff 5%, #6a9bb3 100%); }
.welcome p { color: rgba(255,255,255,.7); }
.welcome h2, .app h3 { font-weight: 500; -webkit-text-stroke: .4px currentColor; }
.app h3 { color: #007aff; }
.grid { display: grid; grid-template-columns: 1fr 1fr; }
.card { background: #fff; color: #007aff; display: flex; flex-direction: column; align-items: center; justify-content: center; aspect-ratio: 1; }
.small .appbody { padding: 37px 18px; }
.small .welcome { height: 96px; border-radius: 18px; padding: 19px 18px; box-shadow: 0 5px 12px rgba(0,0,0,.08); }
.small .welcome p { font-size: 14.500px; line-height: 21px; letter-spacing: .28px; }
.small .welcome h2 { font-size: 22px; line-height: 28px; margin-top: 9px; }
.small h3 { font-size: 18.500px; line-height: 26px; margin: 28px 0 18px; }
.small .grid { gap: 18px 19px; }
.small .card { border-radius: 18px; box-shadow: 0 3px 8px rgba(0,0,0,.04); }
.small .card svg { width: 37px; height: 37px; }
.small .card span { font-size: 14.300px; line-height: 22px; margin-top: 10px; letter-spacing: .4px; }
.big .appbody { padding: 60px 31px 30px 31px; height: 789px; overflow: hidden; }
.big .welcome { height: 157px; border-radius: 30px; padding: 30px; box-shadow: 0 8px 20px rgba(0,0,0,.08); }
.big .welcome p { font-size: 24px; line-height: 36px; letter-spacing: .4px; }
.big .welcome h2 { font-size: 36.300px; line-height: 46px; margin-top: 13px; }
.big h3 { font-size: 30.400px; line-height: 42px; margin: 46px 0 31px; }
.big .grid { gap: 30px; }
.big .card { border-radius: 30px; box-shadow: 0 5px 14px rgba(0,0,0,.04); }
.big .card svg { width: 60px; height: 60px; }
.big .card span { font-size: 24px; line-height: 36px; margin-top: 18px; letter-spacing: .4px; }

/* phone browser bar */
.safari { flex: 1; border-top: 1px solid #eee; padding: 9px 20px 0 20px; display: flex; flex-direction: column; }
.address { height: 39px; background: #e7e7e7; border-radius: 9px; display: flex; align-items: center; justify-content: space-between; padding: 0 14px 0 13px; }
.aa { font-size: 17px; color: #333f55; padding-top: 2px; }
.aa small { font-size: 13px; }
.host { display: flex; align-items: center; gap: 6px; font-size: 13.300px; letter-spacing: -.18px; color: #2c3d60; padding-left: 2px; }
.host svg { color: #000; margin-right: 1px; }
.tools { height: 22px; margin: 13px 1px 0 5px; display: grid; grid-template-columns: 69px 69px 74px 77px 21px; align-items: center; color: #007aff; }
.tools svg { fill: none; stroke: currentColor; stroke-width: 1.500; }
.tools .off { color: #ccc; margin-left: 1px; }
.tools svg:nth-child(3) { margin-left: 1px; }
.homebar { width: 133px; height: 5px; border-radius: 3px; background: #000; margin: 21px 0 0 92px; }

/* simulator rail */
.rail { width: 46px; margin-right: 8px; display: grid; grid-template-rows: 64px 11px 61px 68px 61px 13px 59px 71px 217px 65px 13px 60px 68px 6px 65px; color: #80899b; }
.rail span { display: grid; place-items: center; position: relative; }
.rail svg { width: 34px; height: 34px; }
.rail hr { width: 46px; height: 3px; border: 0; margin: 0; background: #d8dade; align-self: center; }
.rail em { position: absolute; left: -8px; top: 5px; width: 32px; height: 17px; border-radius: 3px; background: #42b76b; color: #fff; font-size: 10px; font-weight: 700; line-height: 17px; text-align: center; }
.rail .low em { top: 10px; }

/* taskbar */
.taskbar { position: absolute; left: 0; top: 1033px; width: 1920px; height: 47px; background: #272625; display: flex; align-items: center; color: #fff; }
.start { width: 54px; padding: 0 0 0 15px; }
.search { width: 387px; height: 46px; align-self: flex-end; border: 2px solid #6d6c6a; background: #504f4c; display: flex; align-items: center; padding-left: 16px; position: relative; }
.search span { font-size: 21.500px; margin-left: 17px; color: #dedede; letter-spacing: -.1px; padding-top: 2px; }
.peak { margin: 8px -2px -2px auto; align-self: flex-end; }
.apps { display: flex; height: 47px; }
.apps span { width: 57px; display: grid; place-items: center; position: relative; }
.apps .open { background: linear-gradient(#b9b2b0, #b9b2b0) center bottom / 43px 3px no-repeat; }
.apps .current { background: linear-gradient(#b9b2b0, #b9b2b0) center bottom / 100% 3px no-repeat, #3b3a39; width: 55px; margin: 0 1px; }
.tray { margin-left: auto; display: flex; align-items: center; height: 47px; }
.ihsg { font-size: 20px; margin-left: 13px; width: 46px; letter-spacing: -.3px; }
.caret { margin-left: 29px; }
.meet { margin-left: 19px; }
.cloud { margin-left: 15px; }
.batt { margin-left: 13px; }
.wifi { margin-left: 15px; }
.vol { margin-left: 14px; }
.clock { font-size: 18px; margin-left: 23px; width: 34px; letter-spacing: -.8px; }
.notif { margin-left: 33px; }
.peekline { width: 2px; height: 46px; background: #777; margin: 1px 6px 0 30px; }
```
